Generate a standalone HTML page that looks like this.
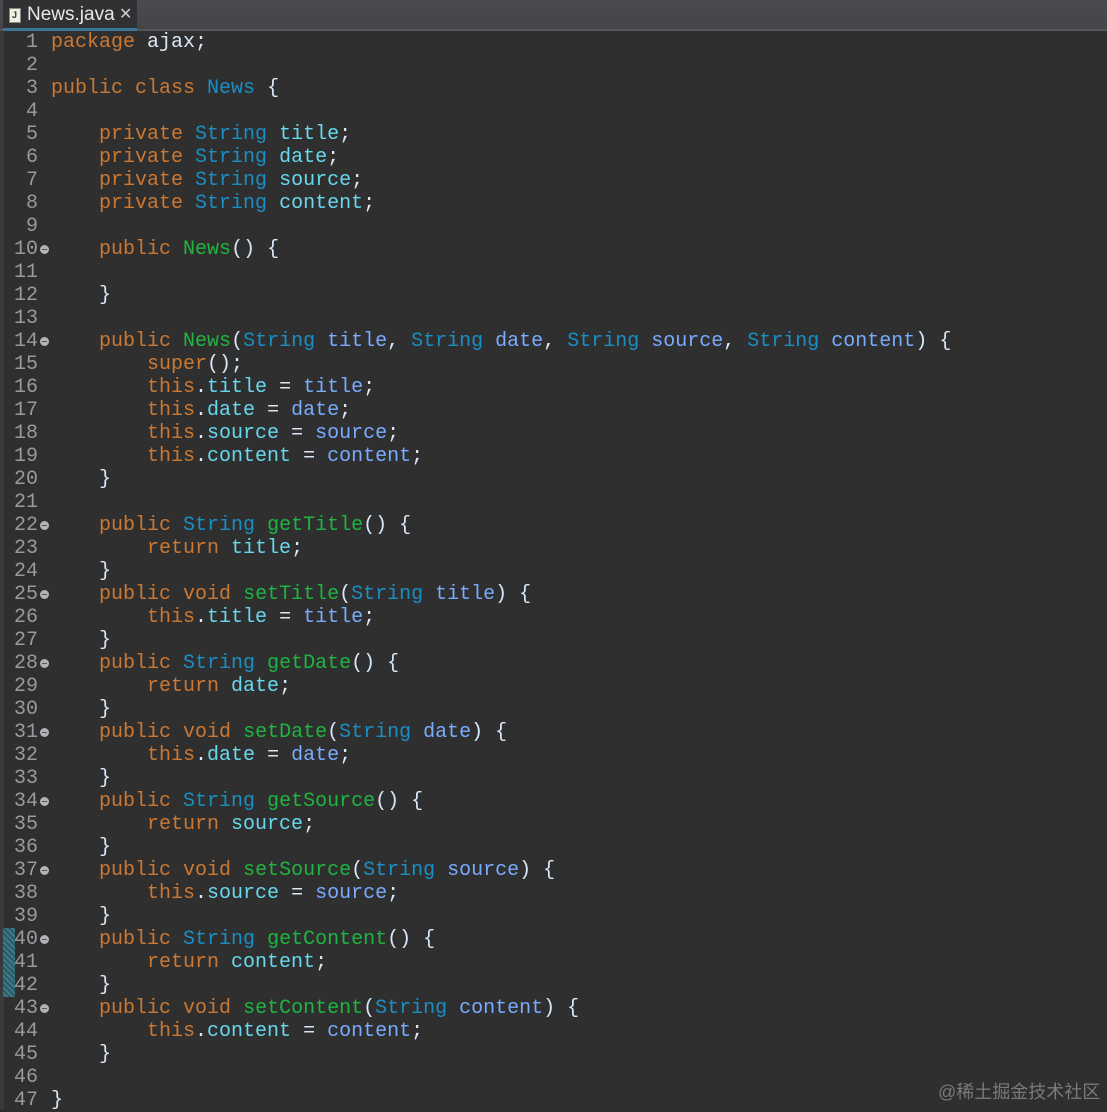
<!DOCTYPE html>
<html><head><meta charset="utf-8"><style>
body{margin:0;width:1107px;height:1109px;background:#2f2f2f;overflow:hidden;position:relative;font-family:"Liberation Mono",monospace}
#bar{position:absolute;left:0;top:0;width:1107px;height:29px;background:linear-gradient(#4a4b4e,#444548);border-bottom:2px solid #565759}
#tab{position:absolute;left:3px;top:0;width:134px;height:28px;background:#2f3133;border-bottom:3px solid #3d7599;font-family:"Liberation Sans",sans-serif;font-size:19px;color:#e8e8e8;line-height:30px}
#tab .ic{position:absolute;left:6px;top:8px;width:10px;height:13px;background:#f0f0e0;border:1px solid #888}
#tab .ic:after{content:"J";position:absolute;left:2px;top:-9px;font-size:9px;color:#333;font-weight:bold}
#tab .t{position:absolute;left:24px;top:0}
#tab .x{position:absolute;left:116px;top:0;font-size:16px;color:#ccc}
#lb{position:absolute;left:0;top:31px;width:4px;height:1078px;background:#3a3a3a}
#code{position:absolute;left:0;top:31px;width:1107px;font-size:20px;line-height:23px;color:#d9e8f7}
.l{position:relative;height:23px}
.n{position:absolute;left:0;width:38px;text-align:right;color:#9a9a9a}
.c{position:absolute;left:51px;white-space:pre}
.f{position:absolute;left:40px;top:7px;width:9px;height:9px;border-radius:50%;background:#b0b4b8}
.f:after{content:"";position:absolute;left:2px;top:4px;width:5px;height:1px;background:#555}
.k{color:#cc7832}.t2{color:#1a8fc4}.m{color:#1eb540}.fd{color:#66d9ef}.p{color:#79abff}
#mk{position:absolute;left:3px;top:928px;width:12px;height:69px;background:repeating-linear-gradient(45deg,#2a5a66 0 2px,#3c7a88 2px 4px)}
#wm{position:absolute;left:938px;top:1078px;font-family:"Liberation Sans","Noto Sans CJK SC",sans-serif;font-size:18px;color:#7a7a7a;white-space:nowrap}
</style></head><body>
<div id="bar"><div id="tab"><span class="ic"></span><span class="t">News.java</span><span class="x">✕</span></div></div>
<div id="lb"></div>
<div id="mk"></div>
<div id="code"><div class="l"><span class="n">1</span><span class="c"><span class="k">package</span> ajax;</span></div><div class="l"><span class="n">2</span></div><div class="l"><span class="n">3</span><span class="c"><span class="k">public class</span> <span class="t2">News</span> {</span></div><div class="l"><span class="n">4</span></div><div class="l"><span class="n">5</span><span class="c">    <span class="k">private</span> <span class="t2">String</span> <span class="fd">title</span>;</span></div><div class="l"><span class="n">6</span><span class="c">    <span class="k">private</span> <span class="t2">String</span> <span class="fd">date</span>;</span></div><div class="l"><span class="n">7</span><span class="c">    <span class="k">private</span> <span class="t2">String</span> <span class="fd">source</span>;</span></div><div class="l"><span class="n">8</span><span class="c">    <span class="k">private</span> <span class="t2">String</span> <span class="fd">content</span>;</span></div><div class="l"><span class="n">9</span></div><div class="l"><span class="n">10</span><span class="f"></span><span class="c">    <span class="k">public</span> <span class="m">News</span>() {</span></div><div class="l"><span class="n">11</span></div><div class="l"><span class="n">12</span><span class="c">    }</span></div><div class="l"><span class="n">13</span></div><div class="l"><span class="n">14</span><span class="f"></span><span class="c">    <span class="k">public</span> <span class="m">News</span>(<span class="t2">String</span> <span class="p">title</span>, <span class="t2">String</span> <span class="p">date</span>, <span class="t2">String</span> <span class="p">source</span>, <span class="t2">String</span> <span class="p">content</span>) {</span></div><div class="l"><span class="n">15</span><span class="c">        <span class="k">super</span>();</span></div><div class="l"><span class="n">16</span><span class="c">        <span class="k">this</span>.<span class="fd">title</span> = <span class="p">title</span>;</span></div><div class="l"><span class="n">17</span><span class="c">        <span class="k">this</span>.<span class="fd">date</span> = <span class="p">date</span>;</span></div><div class="l"><span class="n">18</span><span class="c">        <span class="k">this</span>.<span class="fd">source</span> = <span class="p">source</span>;</span></div><div class="l"><span class="n">19</span><span class="c">        <span class="k">this</span>.<span class="fd">content</span> = <span class="p">content</span>;</span></div><div class="l"><span class="n">20</span><span class="c">    }</span></div><div class="l"><span class="n">21</span></div><div class="l"><span class="n">22</span><span class="f"></span><span class="c">    <span class="k">public</span> <span class="t2">String</span> <span class="m">getTitle</span>() {</span></div><div class="l"><span class="n">23</span><span class="c">        <span class="k">return</span> <span class="fd">title</span>;</span></div><div class="l"><span class="n">24</span><span class="c">    }</span></div><div class="l"><span class="n">25</span><span class="f"></span><span class="c">    <span class="k">public void</span> <span class="m">setTitle</span>(<span class="t2">String</span> <span class="p">title</span>) {</span></div><div class="l"><span class="n">26</span><span class="c">        <span class="k">this</span>.<span class="fd">title</span> = <span class="p">title</span>;</span></div><div class="l"><span class="n">27</span><span class="c">    }</span></div><div class="l"><span class="n">28</span><span class="f"></span><span class="c">    <span class="k">public</span> <span class="t2">String</span> <span class="m">getDate</span>() {</span></div><div class="l"><span class="n">29</span><span class="c">        <span class="k">return</span> <span class="fd">date</span>;</span></div><div class="l"><span class="n">30</span><span class="c">    }</span></div><div class="l"><span class="n">31</span><span class="f"></span><span class="c">    <span class="k">public void</span> <span class="m">setDate</span>(<span class="t2">String</span> <span class="p">date</span>) {</span></div><div class="l"><span class="n">32</span><span class="c">        <span class="k">this</span>.<span class="fd">date</span> = <span class="p">date</span>;</span></div><div class="l"><span class="n">33</span><span class="c">    }</span></div><div class="l"><span class="n">34</span><span class="f"></span><span class="c">    <span class="k">public</span> <span class="t2">String</span> <span class="m">getSource</span>() {</span></div><div class="l"><span class="n">35</span><span class="c">        <span class="k">return</span> <span class="fd">source</span>;</span></div><div class="l"><span class="n">36</span><span class="c">    }</span></div><div class="l"><span class="n">37</span><span class="f"></span><span class="c">    <span class="k">public void</span> <span class="m">setSource</span>(<span class="t2">String</span> <span class="p">source</span>) {</span></div><div class="l"><span class="n">38</span><span class="c">        <span class="k">this</span>.<span class="fd">source</span> = <span class="p">source</span>;</span></div><div class="l"><span class="n">39</span><span class="c">    }</span></div><div class="l"><span class="n">40</span><span class="f"></span><span class="c">    <span class="k">public</span> <span class="t2">String</span> <span class="m">getContent</span>() {</span></div><div class="l"><span class="n">41</span><span class="c">        <span class="k">return</span> <span class="fd">content</span>;</span></div><div class="l"><span class="n">42</span><span class="c">    }</span></div><div class="l"><span class="n">43</span><span class="f"></span><span class="c">    <span class="k">public void</span> <span class="m">setContent</span>(<span class="t2">String</span> <span class="p">content</span>) {</span></div><div class="l"><span class="n">44</span><span class="c">        <span class="k">this</span>.<span class="fd">content</span> = <span class="p">content</span>;</span></div><div class="l"><span class="n">45</span><span class="c">    }</span></div><div class="l"><span class="n">46</span></div><div class="l"><span class="n">47</span><span class="c">}</span></div></div>
<div id="wm">@稀土掘金技术社区</div>
</body></html>
